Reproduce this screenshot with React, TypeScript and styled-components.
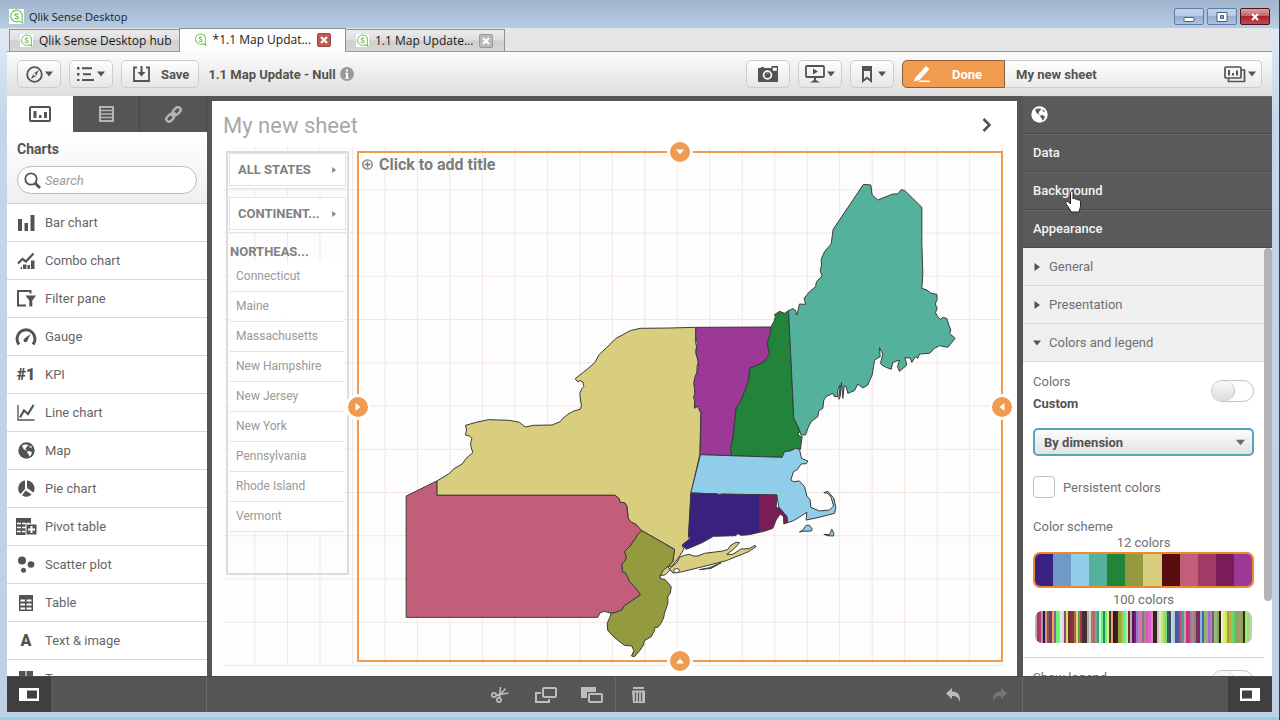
import React from 'react';
import styled, { createGlobalStyle, css } from 'styled-components';

const ink = '#545352';
const orange = '#ef9c50';
const ui = `Roboto, "Liberation Sans", sans-serif`;
const chrome = `"Open Sans", "Noto Sans", sans-serif`;

const GlobalStyle = createGlobalStyle`
  * { box-sizing: border-box; }
  body { margin: 0; font-family: ${ui}; font-size: 13px; color: ${ink}; }
  button, input, select { font: inherit; color: inherit; }
  button { border: 0; padding: 0; background: none; cursor: pointer; }
  ul { list-style: none; margin: 0; padding: 0; }
  h1, h2, h3, p { margin: 0; font-size: inherit; font-weight: inherit; }
  svg { display: block; flex: none; }
`;

/* ---------- window ---------- */

const Window = styled.div`
  display: flex;
  flex-direction: column;
  height: 100vh;
  padding: 0 7px 8px;
  overflow: hidden;
  border-right: 1px solid #0d4a52;
  background:
    linear-gradient(#8fd3ea, #8fd3ea) bottom / 100% 3px no-repeat,
    linear-gradient(#a1b5cc, #b7cce4 28px, #dfeaf6 29px, #c4d6ea 120px, #bfcfe4);
`;

const TitleBar = styled.header`
  display: flex;
  align-items: center;
  flex: none;
  height: 28px;
  padding: 5px 2px 0;
  gap: 5px;
  font-family: ${chrome};
  font-size: 11px;
  color: #1a1a1a;
`;

const WindowTitle = styled.h1`
  flex: 1;
`;

const WindowButtons = styled.div`
  display: flex;
  gap: 3px;
`;

const WindowButton = styled.button<{ $close?: boolean }>`
  display: grid;
  place-items: center;
  width: 30px;
  height: 17px;
  border: 1px solid ${p => (p.$close ? '#4a1420' : '#5f7da6')};
  border-radius: 2px;
  background: ${p =>
    p.$close
      ? 'linear-gradient(#dba3a6, #c4636a 45%, #a8242c 50%, #c04a50)'
      : 'linear-gradient(#c3d5ec, #b4c9e4 45%, #95afd0 50%, #acc3df)'};
`;

const TabStrip = styled.nav`
  display: flex;
  align-items: flex-end;
  flex: none;
  height: 24px;
  padding-left: 2px;
  background: #e6e6e6;
  border-bottom: 1px solid #9a9a9a;
  font-family: ${chrome};
  font-size: 12px;
  color: #1a1a1a;
`;

const Tab = styled.div<{ $active?: boolean }>`
  display: flex;
  align-items: center;
  height: 22px;
  padding: 0 7px 0 10px;
  border: 1px solid #8f8f8f;
  border-bottom: 0;
  margin-right: -1px;
  gap: 6px;
  background: linear-gradient(#ececec, #dedede 48%, #cfcfcf 52%, #d6d6d6);
  ${p => p.$active && css`
    position: relative;
    height: 24px;
    padding: 0 10px 2px 14px;
    margin-bottom: -1px;
    background: #fdfdfd;
  `}
`;

const TabLabel = styled.button`
  display: flex;
  align-items: center;
  gap: 6px;
`;

const TabClose = styled.button<{ $hot?: boolean }>`
  display: grid;
  place-items: center;
  width: 14px;
  height: 14px;
  margin-right: 4px;
  border: 1px solid ${p => (p.$hot ? '#9c4a42' : '#9a9a9a')};
  border-radius: 2px;
  background: ${p => (p.$hot ? '#c0594f' : '#b9b9b9')};
`;

/* ---------- toolbar ---------- */

const Toolbar = styled.div`
  display: flex;
  align-items: center;
  flex: none;
  height: 44px;
  padding: 0 10px;
  gap: 8px;
  background: linear-gradient(#fcfcfc, #dedede);
  font-weight: 700;
`;

const ToolButton = styled.button`
  display: flex;
  align-items: center;
  justify-content: center;
  height: 28px;
  min-width: 44px;
  padding: 0 6px;
  gap: 2px;
  border: 1px solid #cdcdcd;
  border-radius: 5px;
  background: linear-gradient(#fdfdfd, #e6e6e6);
  font-weight: 700;
`;

const SaveButton = styled(ToolButton)`
  padding: 0 9px 0 10px;
  gap: 10px;
`;

const AppName = styled.div`
  display: flex;
  align-items: center;
  flex: 1;
  gap: 4px;
  padding-left: 1px;
`;

const SheetSwitch = styled.div`
  display: flex;
  width: 360px;
  height: 28px;
`;

const DoneButton = styled.button`
  display: flex;
  align-items: center;
  width: 103px;
  padding-left: 10px;
  gap: 19px;
  border: 1px solid #8a6238;
  border-radius: 5px 0 0 5px;
  background: #f09b4d;
  color: #fff;
  font-weight: 700;
`;

const SheetPicker = styled.button`
  display: flex;
  align-items: center;
  justify-content: space-between;
  flex: 1;
  padding: 0 5px 0 11px;
  border: 1px solid #cdcdcd;
  border-left: 0;
  border-radius: 0 5px 5px 0;
  background: linear-gradient(#fdfdfd, #ebebeb);
  font-weight: 700;
`;

const IconRow = styled.span`
  display: flex;
  align-items: center;
  gap: 2px;
`;

/* ---------- body ---------- */

const Body = styled.main`
  display: grid;
  grid-template-columns: 200px minmax(0, 1fr) 249px;
  grid-template-rows: minmax(0, 1fr);
  flex: 1;
  min-height: 0;
`;

const AssetPanel = styled.aside`
  display: flex;
  flex-direction: column;
  min-height: 0;
  overflow: hidden;
  background: #fff;
`;

const AssetTabs = styled.div`
  display: grid;
  grid-template-columns: 66px 1fr 1fr;
  flex: none;
  height: 36px;
  background: #555;
`;

const AssetTab = styled.button<{ $active?: boolean }>`
  display: grid;
  place-items: center;
  color: ${p => (p.$active ? ink : '#b5b5b5')};
  background: ${p => (p.$active ? '#fff' : '#555')};
  border-right: 1px solid ${p => (p.$active ? '#fff' : '#474747')};
`;

const AssetHead = styled.div`
  flex: none;
  height: 72px;
  padding: 9px 10px 0;
  border-bottom: 1px solid #cfd4d6;
  background: linear-gradient(#fff, #efefef);
`;

const AssetTitle = styled.h2`
  font-size: 14px;
  line-height: 16px;
  font-weight: 700;
`;

const SearchField = styled.label`
  display: flex;
  align-items: center;
  height: 28px;
  margin-top: 9px;
  padding: 0 6px;
  gap: 4px;
  border: 1px solid #bdbdbd;
  border-radius: 14px;
  background: #fff;
`;

const SearchInput = styled.input`
  flex: 1;
  min-width: 0;
  padding: 0;
  border: 0;
  outline: 0;
  background: none;
  font-style: italic;
  &::placeholder { color: #9b9b9b; }
`;

const AssetItem = styled.li`
  display: flex;
  align-items: center;
  height: 38px;
  padding-left: 8px;
  gap: 8px;
  border-bottom: 1px solid #d3dadd;
  color: #666;
`;

const AssetIcon = styled.span`
  display: grid;
  place-items: center;
  width: 22px;
  height: 22px;
  font-size: 16px;
  font-weight: 900;
  color: ${ink};
`;

const Stage = styled.section`
  display: flex;
  min-width: 0;
  padding: 5px 6px 0 5px;
  background: #555;
`;

const Sheet = styled.div`
  display: flex;
  flex-direction: column;
  flex: 1;
  min-width: 0;
  padding: 0 14px 10px 11px;
  background: #fff;
`;

const SheetHead = styled.div`
  display: flex;
  align-items: center;
  justify-content: space-between;
  flex: none;
  height: 46px;
  padding: 2px 10px 0 0;
`;

const SheetTitle = styled.h2`
  font-size: 22px;
  font-weight: 400;
  color: #a8a8a8;
`;

const Canvas = styled.div`
  display: grid;
  grid-template-columns: 123px minmax(0, 1fr);
  grid-template-rows: minmax(0, 1fr);
  gap: 8px;
  flex: 1;
  min-height: 0;
  padding: 4px 0 4px 3px;
  background-color: #fefdfd;
  background-image:
    linear-gradient(to left, #f3e6df 1px, transparent 1px),
    linear-gradient(to top, #f3e6df 1px, transparent 1px);
  background-size: calc(100% / 24) 100%, 100% calc(100% / 12);
`;

const FilterPane = styled.div`
  height: 83%;
  padding: 0 1px;
  border: 2px solid #dcdcdc;
  overflow: hidden;
  font-size: 12px;
  color: #999;
`;

const FilterButton = styled.button`
  display: flex;
  align-items: center;
  justify-content: space-between;
  width: 100%;
  height: 36px;
  margin-bottom: 8px;
  padding: 0 8px;
  border: 1px solid #e4e4e4;
  border-bottom: 4px double #e4e4e4;
  background: #fffffff0;
  font-weight: 700;
  font-size: 13px;
  color: #808080;
`;

const ListTitle = styled.h3`
  padding-left: 1px;
  line-height: 21px;
  font-weight: 700;
  font-size: 13px;
  color: #808080;
`;

const StateList = styled.ul`
  padding: 0 2px 0 1px;
`;

const StateItem = styled.li`
  height: 30px;
  padding-left: 6px;
  line-height: 29px;
  border-bottom: 1px solid #e4e4e4;
  background: #fffffff0;
`;

const ChartFrame = styled.div`
  position: relative;
  display: flex;
  flex-direction: column;
  min-width: 0;
  min-height: 0;
  border: 2px solid ${orange};
`;

const ChartTitle = styled.div`
  display: flex;
  align-items: center;
  flex: none;
  height: 26px;
  padding: 0 0 4px 3px;
  gap: 6px;
  font-size: 16px;
  font-weight: 700;
  color: #7c7c7c;
`;

const MapArea = styled.svg`
  flex: 1;
  width: 100%;
  min-height: 0;
`;

const edges = {
  top: css`top: -14px; left: calc(50% - 13px);`,
  bottom: css`bottom: -14px; left: calc(50% - 13px); transform: rotate(180deg);`,
  left: css`left: -14px; top: calc(50% - 13px); transform: rotate(-90deg);`,
  right: css`right: -14px; top: calc(50% - 13px); transform: rotate(90deg);`,
};

const Handle = styled.button<{ $edge: keyof typeof edges }>`
  position: absolute;
  width: 26px;
  height: 26px;
  display: grid;
  place-items: center;
  border: 3px solid #fff;
  border-radius: 50%;
  background: ${orange};
  ${p => edges[p.$edge]}
`;

/* ---------- properties ---------- */

const Properties = styled.aside`
  display: flex;
  flex-direction: column;
  min-height: 0;
  overflow: hidden;
  background: #fff;
`;

const PropHeader = styled.button`
  position: relative;
  display: flex;
  align-items: center;
  flex: none;
  height: 38px;
  padding-left: 10px;
  background: #5a5a5a;
  border-bottom: 1px solid #4a4a4a;
  box-shadow: inset 0 1px #686868;
  color: #f4f4f4;
  font-weight: 500;
`;

const PropIcon = styled(PropHeader)`
  padding-left: 8px;
`;

const Pointer = styled.svg`
  position: absolute;
  left: 42px;
  top: 18px;
  z-index: 1;
`;

const PropScroll = styled.div`
  flex: 1;
  min-height: 0;
  display: grid;
  grid-template-columns: minmax(0, 1fr) 8px;
  overflow: hidden;
`;

const ScrollThumb = styled.div`
  height: 353px;
  border-radius: 4px;
  background: #b3b3b3;
`;

const Section = styled.button`
  display: flex;
  align-items: center;
  width: 100%;
  height: 38px;
  padding-left: 10px;
  gap: 8px;
  border-bottom: 1px solid #d9d9d9;
  background: #efefef;
  color: #707070;
`;

const SectionBody = styled.div`
  padding: 9px 10px 0;
  color: #707070;
`;

const Switch = styled.input`
  appearance: none;
  width: 43px;
  height: 22px;
  margin: 0;
  border: 1px solid #c4c4c4;
  border-radius: 11px;
  background: #fdfdfd;
  &::before {
    content: '';
    display: block;
    width: 22px;
    height: 20px;
    border-right: 1px solid #c4c4c4;
    border-radius: 11px;
    background: linear-gradient(#fafafa, #dcdcdc);
  }
`;

const ColorsRow = styled.label`
  display: flex;
  align-items: flex-start;
  justify-content: space-between;
  height: 43px;
  line-height: 22px;
  ${Switch} { margin-top: 9px; }
`;

const Strong = styled.strong`
  display: block;
  color: ${ink};
`;

const SelectBox = styled.div`
  display: grid;
  grid-template-columns: 1fr;
  align-items: center;
  margin-top: 14px;
  > * { grid-area: 1 / 1; }
  > svg { justify-self: end; margin-right: 9px; pointer-events: none; }
`;

const Select = styled.select`
  appearance: none;
  width: 100%;
  height: 28px;
  padding: 0 9px;
  border: 2px solid #55a5bd;
  border-radius: 5px;
  background: linear-gradient(#fcfcfc, #e2e2e2);
  color: ${ink};
  font-weight: 700;
`;

const CheckRow = styled.label`
  display: flex;
  align-items: center;
  height: 22px;
  margin-top: 20px;
  gap: 8px;
`;

const Check = styled.input`
  appearance: none;
  width: 22px;
  height: 22px;
  margin: 0;
  border: 1px solid #c0c0c0;
  border-radius: 4px;
  background: #fff;
`;

const FieldLabel = styled.p`
  margin-top: 20px;
  line-height: 17px;
`;

const Scheme = styled.button`
  display: block;
  width: 100%;
  line-height: 16px;
  margin-bottom: 4px;
`;

const Swatches = styled.span<{ $selected?: boolean }>`
  display: flex;
  height: ${p => (p.$selected ? 36 : 32)}px;
  margin: ${p => (p.$selected ? '1px 0 0' : '3px 2px 0')};
  border: ${p => (p.$selected ? '2px solid #ee8a2e' : '0')};
  border-radius: 7px;
  overflow: hidden;
`;

const Swatch = styled.span<{ $c: string }>`
  flex: 1;
  background: ${p => p.$c};
`;

const LegendRow = styled.label`
  display: flex;
  align-items: flex-start;
  justify-content: space-between;
  margin: 14px -10px 0;
  padding: 12px 10px 0;
  border-top: 1px solid #d4d4d4;
`;

/* ---------- footer ---------- */

const Footer = styled.footer`
  display: grid;
  grid-template-columns: 200px minmax(0, 1fr) 250px;
  flex: none;
  height: 36px;
  background: #565656;
  border-top: 1px solid #4a4a4a;
`;

const FooterGroup = styled.div<{ $end?: boolean }>`
  display: flex;
  justify-content: ${p => (p.$end ? 'flex-end' : 'flex-start')};
  border-${p => (p.$end ? 'left' : 'right')}: 1px solid #6a6a6a;
`;

const PanelToggle = styled.button`
  display: grid;
  place-items: center;
  width: 44px;
  background: #3f3f3f;
`;

const EditTools = styled.div`
  display: flex;
  align-items: center;
  padding-left: 270px;
`;

const EditButton = styled.button<{ $dim?: boolean; $divided?: boolean }>`
  display: grid;
  place-items: center;
  width: 46px;
  height: 100%;
  color: ${p => (p.$dim ? '#757575' : '#bdbdbd')};
  ${p => p.$divided && css`border-left: 1px solid #666;`}
`;

const Spacer = styled.span`
  flex: 1;
`;

/* ---------- icons ---------- */

const Caret = ({ dir = 'down', size = 8, color = ink }: { dir?: 'down' | 'right'; size?: number; color?: string }) => (
  <svg width={size} height={size} viewBox="0 0 8 8" fill={color}>
    <path d={dir === 'down' ? 'M0 1.5h8L4 6.5z' : 'M1.5 0v8L7 4z'} />
  </svg>
);

const Logo = ({ size = 13 }: { size?: number }) => (
  <svg width={size} height={size} viewBox="0 0 14 14" fill="none" stroke="#74c153">
    <rect width="14" height="14" fill="#fff" stroke="none" />
    <path d="M12 9A5.500 5.500 0 1 0 9.500 11.500L12.800 13L12 9" strokeWidth="1.100" />
    <path d="M8.700 5C8 4.200 5.600 4.300 5.600 5.500S8.700 6.700 8.700 8.100 6 9.400 5.300 8.500" strokeWidth="1.200" />
  </svg>
);

const Cross = ({ size = 8 }: { size?: number }) => (
  <svg width={size} height={size} viewBox="0 0 8 8" stroke="#fff" strokeWidth="2">
    <path d="M1 1l6 6M7 1L1 7" />
  </svg>
);

const Globe = ({ size = 17, land = '#fff', sea = ink }: { size?: number; land?: string; sea?: string }) => (
  <svg width={size} height={size} viewBox="0 0 17 17">
    <circle cx="8.500" cy="8.500" r="8.200" fill={sea} />
    <path d="M4 3.500C5.500 2.500 7 2.300 9 2.500l1.500 1-1.500 1L8 6l-.8 1L9 8.300 8 8.500 5.500 7zM9.500 9l2.500.3 2 1.200-1 2.500-1.800 1.800-.5-2.600L9.300 11zM11.500 3.500l2.500 1.500-.8 1-1.700-1z" fill={land} />
  </svg>
);

const ChartBoard = () => (
  <svg width="22" height="16" viewBox="0 0 22 16" fill="currentColor">
    <rect x="1" y="1" width="20" height="14" rx="1" fill="none" stroke="currentColor" strokeWidth="2" />
    <path d="M4.500 5h3v7h-3zM10 9h2.500v3H10zM15 6h3v6h-3z" />
  </svg>
);

const assets: [string, React.ReactNode][] = [
  ['Bar chart', <svg width="18" height="16" viewBox="0 0 18 16" fill={ink}><path d="M1 4h4v12H1zM7.500 8h3.500v8H7.500zM13.500 0h4v16h-4z" /></svg>],
  ['Combo chart', <svg width="18" height="16" viewBox="0 0 18 16"><path d="M1 10.500L5.500 6l3.500 2.500L16.500 0.500" fill="none" stroke={ink} strokeWidth="2.200" /><path d="M3 16l2-3v3zM6 11.500h3.500V16H6zM10.500 12H13v4h-2.500zM14 7.500h3.500V16H14z" fill={ink} /></svg>],
  ['Filter pane', <svg width="20" height="17" viewBox="0 0 20 17"><path d="M14.500 3.500V1H2v14.500h8" fill="none" stroke={ink} strokeWidth="2" /><path d="M9.500 5.500H20l-3.700 5v6h-3v-6z" fill={ink} /></svg>],
  ['Gauge', <svg width="22" height="18" viewBox="0 0 22 18"><path d="M4 16.500A9 9 0 1 1 18 16.500" fill="none" stroke={ink} strokeWidth="3" /><path d="M15.500 6l-3 6.500a2 2 0 1 1-3-2z" fill={ink} /></svg>],
  ['KPI', '#1'],
  ['Line chart', <svg width="18" height="17" viewBox="0 0 18 17" fill="none" stroke={ink}><path d="M1 1v15h16.500" strokeWidth="1.300" /><path d="M3 13.500l4-7 4 3.500 5.500-9" strokeWidth="2.200" /></svg>],
  ['Map', <Globe />],
  ['Pie chart', <svg width="17" height="17" viewBox="0 0 17 17" fill={ink}><path d="M7 .5A8 8 0 0 0 2.500 14L7 9zM9 .5A8 8 0 0 1 15.500 12.500L9 8zM7.700 10.500l6 4A8 8 0 0 1 4 15.200z" /></svg>],
  ['Pivot table', <svg width="22" height="17" viewBox="0 0 22 17"><path d="M1 0h15v17H1z" fill={ink} /><path d="M2 5.500h4M7 5.500h4M12 5.500h3M2 9.500h4M7 9.500h4M2 13.500h4M7 13.500h3" stroke="#fff" strokeWidth="1.500" /><path d="M11 6h11v11H11z" fill={ink} stroke="#fff" /><path d="M16.500 8v7M13 11.500h7" stroke="#fff" strokeWidth="2" /></svg>],
  ['Scatter plot', <svg width="18" height="17" viewBox="0 0 18 17" fill={ink}><circle cx="5" cy="4.500" r="4" /><circle cx="14" cy="8.500" r="3.300" /><circle cx="6.500" cy="14.300" r="2.500" /></svg>],
  ['Table', <svg width="14" height="16" viewBox="0 0 14 16"><path d="M0 0h14v16H0z" fill={ink} /><path d="M1.500 5.500H6M7.500 5.500h5M1.500 9.500H6M7.500 9.500h5M1.500 13.500H6M7.500 13.500h5" stroke="#fff" strokeWidth="2" /></svg>],
  ['Text & image', 'A'],
  ['Treemap', <svg width="16" height="16" viewBox="0 0 16 16" fill={ink}><path d="M1 0h6.500v16H1zM8.500 0H15v7H8.500zM8.500 8H15v8H8.500z" /></svg>],
];

/* ---------- map data ---------- */

// Shared boundary runs, so neighbouring states meet without slivers.
const delaware = '677,556 688,565 692,577 705,578 712,588 714,605 716,625 725,637 738,642 750,655 757,662';
const paNj = '757,662 745,673 738,685 722,708 705,725 711,742 705,755 697,762 699,785 706,787 714,800 720,815 732,827 745,842 753,855 733,868 705,887 697,900 680,907 665,910';
const njPa = paNj.split(' ').reverse().join(' ');

const shapes: { origin: [number, number]; fill: string; points: string }[] = [
  { origin: [96, 474], fill: '#d9cd7e', points: `142,513 180,490 192,477 218,462 230,445 250,428 245,412 243,400 247,385 240,378 228,375 231,360 228,346 260,337 297,329 360,331 390,337 407,351 432,346 488,345 512,335 520,325 535,313 553,303 572,298 576,288 573,270 571,250 577,236 583,230 580,216 572,212 564,215 557,206 590,180 616,158 628,135 650,114 680,85 722,62 752,55 840,54 918,52 920,70 917,90 921,110 919,130 927,155 922,172 923,190 914,215 916,250 920,262 914,290 920,293 925,288 934,310 931,433 905,548 897,683 903,685 878,705 883,718 866,745 848,768 835,770 850,755 855,718 757,662 ${delaware.split(' ').reverse().join(' ')} 142,556` },
  { origin: [96, 474], fill: '#c25d7a', points: `142,513 142,556 ${delaware} ${paNj} 645,904 632,908 625,922 50,922 50,558` },
  { origin: [96, 474], fill: '#949b3e', points: `757,662 855,718 850,755 835,770 812,797 812,806 826,808 845,830 843,848 835,860 835,880 825,910 822,925 813,942 805,952 796,952 795,962 785,980 765,992 762,1005 752,1020 735,1040 726,1038 733,1022 727,1008 705,1006 680,987 655,962 653,940 662,920 ${njPa}` },
  { origin: [936, 54], fill: '#9c3895', points: '80,472 304,471 303,490 293,520 300,550 285,575 260,587 240,595 238,630 225,665 215,690 200,715 195,760 190,810 183,835 186,857 92,854 95,730 85,708 75,715 77,700 72,680 77,670 73,640 76,622 85,600 86,575 79,545 83,520 78,495' },
  { origin: [936, 54], fill: '#22833a', points: '304,471 313,455 318,440 315,434 330,424 345,430 357,422 373,740 388,765 390,785 385,795 398,800 395,820 393,838 378,835 365,842 350,845 338,862 186,857 183,835 190,810 195,760 200,715 215,690 225,665 238,630 240,595 260,587 285,575 300,550 293,520 303,490' },
  { origin: [936, 54], fill: '#54b19c', points: '357,422 370,416 377,420 382,435 390,402 408,403 404,385 420,365 438,350 441,335 458,318 452,302 456,285 455,268 465,245 485,222 491,178 582,43 604,45 608,75 625,90 670,72 685,72 695,59 706,62 757,112 757,220 760,310 757,355 772,360 785,370 802,373 803,388 797,402 803,415 798,428 803,438 812,448 822,442 832,446 838,465 844,480 840,490 857,505 835,532 810,527 795,535 780,550 750,552 745,565 738,560 727,577 722,564 706,563 712,585 690,604 684,590 690,570 670,577 665,598 650,592 637,585 633,580 640,552 636,545 630,533 632,560 615,570 612,590 608,615 600,632 595,645 580,654 565,642 555,662 535,670 530,650 524,648 520,685 516,636 512,680 508,688 512,645 505,660 505,680 495,680 490,670 470,680 463,690 460,715 448,722 445,740 425,755 415,775 408,795 395,795 388,775 373,745' },
  { origin: [696, 804], fill: '#8fcde8', points: '333,104 420,107 578,112 585,95 605,92 618,85 630,88 636,115 655,123 650,131 635,132 622,150 612,155 604,180 612,185 630,183 645,200 652,228 662,240 664,262 690,273 720,270 732,258 725,232 715,220 703,218 715,214 733,235 739,262 735,280 680,294 650,300 652,276 640,285 612,302 594,308 592,290 580,275 568,262 562,225 390,223 304,218' },
  { origin: [696, 804], fill: '#39217f', points: '304,220 382,221 390,225 397,222 510,224 510,337 480,344 455,346 445,341 438,347 372,349 340,367 315,378 290,388 278,375 303,355 297,345' },
  { origin: [696, 804], fill: '#7a1c58', points: '510,224 562,225 560,262 568,265 572,282 560,300 550,325 530,332 510,337' },
  { origin: [696, 804], fill: '#7a1c58', points: '568,262 580,275 592,290 594,308 583,312 582,290 570,280' },
  { origin: [696, 804], fill: '#d9cd7e', points: '240,446 262,428 270,412 285,406 300,403 312,408 325,408 345,400 400,393 415,388 425,375 440,367 450,368 435,385 412,403 430,403 455,387 478,386 497,376 499,381 475,396 410,422 340,440 270,457 250,459' },
  { origin: [696, 804], fill: '#d9cd7e', points: '212,467 222,450 235,440 242,450 228,464' },
  { origin: [696, 804], fill: '#6b6b50', points: '330,449 360,443 395,428 365,445' },
  { origin: [696, 804], fill: '#8fcde8', points: '630,336 640,330 650,316 660,316 668,326 666,333 640,334' },
  { origin: [696, 804], fill: '#8fcde8', points: '703,343 720,344 727,328 733,340 732,348 715,347' },
];

const StateMap = () => (
  <MapArea viewBox="6 81 1923 1443" role="img" aria-label="Map of the northeastern states">
    {shapes.map((s, i) => (
      <polygon
        key={i}
        points={s.points}
        transform={`translate(${s.origin[0]} ${s.origin[1]})`}
        fill={s.fill}
        stroke="#3b3a3c"
        strokeWidth="3"
        strokeLinejoin="round"
      />
    ))}
    <ellipse cx="957" cy="1256" rx="9" ry="6" fill="#fff" stroke="#3b3a3c" strokeWidth="3" />
  </MapArea>
);

const states = ['Connecticut', 'Maine', 'Massachusetts', 'New Hampshire', 'New Jersey', 'New York', 'Pennsylvania', 'Rhode Island', 'Vermont'];

const twelve = ['#39217f', '#7099c8', '#8fcde8', '#54b19c', '#22833a', '#949b3e', '#d9cd7e', '#5a0d0d', '#c25d7a', '#a03b66', '#7a1c58', '#9c3895'];

const hundred = (
  'b8b0a8 b03070 c83078 a0a0a0 201848 e09080 70604c 902878 e0b040 9060a0 60f870 70f870 d8f0d8 e0d0f0 8a4a6a d8e060 5a3a2a 902a3a 8a3040 a07050 f0d060 50a848 c02850 453030 453030 b0b0a8 ' +
  'd8d0c8 c07068 b06860 60b098 3a9a88 d0f0c8 68f078 209060 70f860 e8f080 404040 e8a090 3a1414 4a1a1a 88a840 98b040 b8c850 60f890 b0f0b0 802838 c0b0a0 501858 801880 9878c8 b080d0 d878a8 ' +
  'a06880 88a070 d858c8 e060d0 d090b0 3a2020 3a2020 d0c0c0 c8f0c0 c8e888 b0d850 70e088 386060 385050 c8d8e8 b0c8d8 3860a0 6050a8 c04860 5098a0 b0b0a8 d82888 d83080 8888a0 b08878 987890 ' +
  '703058 802858 88b8d8 5060b8 90b850 a0a890 a868d0 b878d0 686860 98b880 80a858 301c10 f0f0d8 e0f060 d8e850 90a840 c8a850 68d868 68d060 80a870 a09868 a0a060 88a058 402818 90f070 a8d880 b8d8a8'
).split(' ').map(c => `#${c}`);

export default function App() {
  return (
    <Window>
      <GlobalStyle />
      <TitleBar>
        <Logo size={15} />
        <WindowTitle>Qlik Sense Desktop</WindowTitle>
        <WindowButtons>
          <WindowButton aria-label="Minimize">
            <svg width="12" height="10" viewBox="0 0 12 10"><rect x="1" y="5.500" width="10" height="4" rx="1" fill="#fff" stroke="#4d5d75" /></svg>
          </WindowButton>
          <WindowButton aria-label="Maximize">
            <svg width="12" height="10" viewBox="0 0 12 10"><path d="M1 .5h10v9H1zM4.500 3.500h3v3h-3z" fill="#fff" fillRule="evenodd" stroke="#4d5d75" /></svg>
          </WindowButton>
          <WindowButton $close aria-label="Close"><Cross /></WindowButton>
        </WindowButtons>
      </TitleBar>

      <TabStrip>
        <Tab><TabLabel><Logo />Qlik Sense Desktop hub</TabLabel></Tab>
        <Tab $active>
          <TabLabel><Logo />*1.1 Map Updat...</TabLabel>
          <TabClose $hot aria-label="Close tab"><Cross /></TabClose>
        </Tab>
        <Tab>
          <TabLabel><Logo />1.1 Map Update...</TabLabel>
          <TabClose aria-label="Close tab"><Cross /></TabClose>
        </Tab>
      </TabStrip>

      <Toolbar>
        <ToolButton aria-label="Navigation">
          <svg width="17" height="17" viewBox="0 0 17 17"><circle cx="8.500" cy="8.500" r="7.300" fill="none" stroke={ink} strokeWidth="1.800" /><path d="M13 4L10 10l-5 3 2.500-5.500z" fill={ink} /><circle cx="8.500" cy="8.500" r="1.200" fill="#fff" /></svg>
          <Caret />
        </ToolButton>
        <ToolButton aria-label="Menu">
          <svg width="18" height="14" viewBox="0 0 18 14" fill={ink}><path d="M0 0h2.500v2.500H0zM0 6h2.500v2.500H0zM0 12h2.500v2H0zM5 .3h10v2H5zM6 6.200h8v2H6zM5 12h12v2H5z" /></svg>
          <Caret />
        </ToolButton>
        <SaveButton>
          <svg width="19" height="16" viewBox="0 0 19 16"><path d="M5 1.500H2V15h15V1.500h-3" fill="none" stroke={ink} strokeWidth="1.800" /><path d="M8.500 0h2v6h3l-4 4.500L5.500 6h3z" fill={ink} /></svg>
          Save
        </SaveButton>
        <AppName>
          1.1 Map Update - Null
          <svg width="14" height="14" viewBox="0 0 14 14"><circle cx="7" cy="7" r="7" fill="#9a9a9a" /><path d="M6 2.500h2v2H6zM5.200 5.700H8v5h1v1H5.200v-1H6V6.700h-.8z" fill="#fff" /></svg>
        </AppName>
        <ToolButton aria-label="Snapshot">
          <svg width="20" height="16" viewBox="0 0 20 16"><path d="M0 2h3V1h3v1h7.500V0H20v16H0z" fill={ink} /><circle cx="9.500" cy="9" r="3.900" fill={ink} stroke="#fff" strokeWidth="1.700" /><path d="M8.500 7.500a2 2 0 0 1 2-.5M15 2h3.500v2.500H15z" fill="#fff" stroke="#fff" strokeWidth=".5" /></svg>
        </ToolButton>
        <ToolButton aria-label="Stories">
          <svg width="20" height="18" viewBox="0 0 20 18"><rect x="1" y="1" width="18" height="11" rx="1" fill="none" stroke={ink} strokeWidth="1.800" /><path d="M8 3.500v6l5-3zM9 12h2v3l4 2.500H5L9 15z" fill={ink} /></svg>
          <Caret />
        </ToolButton>
        <ToolButton aria-label="Bookmarks">
          <svg width="18" height="17" viewBox="0 0 18 17"><path d="M4 0h10v17l-5-4-5 4z" fill={ink} /><path d="M6 5h6v8l-3-2.500L6 13z" fill="#eee" /></svg>
          <Caret />
        </ToolButton>
        <SheetSwitch>
          <DoneButton>
            <svg width="20" height="16" viewBox="0 0 20 16" fill="#fff"><path d="M2 12L13 0l3.500 3L6.500 14 1 15.500zM7 14.500h10V16H5z" /></svg>
            Done
          </DoneButton>
          <SheetPicker>
            My new sheet
            <IconRow>
              <svg width="22" height="17" viewBox="0 0 22 17"><path d="M17.500 4h3v11.500h-16v-3" fill="none" stroke={ink} strokeWidth="1.700" /><rect x="1" y="1" width="16" height="11" rx="1" fill="none" stroke={ink} strokeWidth="1.700" /><path d="M4 4h2v5.500H4zM8 7h2v2.500H8zM12 4.500h2v5h-2z" fill={ink} /></svg>
              <Caret />
            </IconRow>
          </SheetPicker>
        </SheetSwitch>
      </Toolbar>

      <Body>
        <AssetPanel>
          <AssetTabs>
            <AssetTab $active aria-label="Charts"><ChartBoard /></AssetTab>
            <AssetTab aria-label="Fields">
              <svg width="15" height="16" viewBox="0 0 15 16" fill="none" stroke="currentColor"><rect x="1" y="1" width="13" height="14" strokeWidth="2" /><path d="M2 4.500h11M2 8h11M2 11.500h11" strokeWidth="1.500" /></svg>
            </AssetTab>
            <AssetTab aria-label="Master items">
              <svg width="17" height="17" viewBox="0 0 17 17" fill="none" stroke="currentColor" strokeWidth="2.400"><rect x="-4.300" y="-2.700" width="8.600" height="5.400" rx="2.700" transform="translate(11.800 5) rotate(-45)" /><rect x="-4.300" y="-2.700" width="8.600" height="5.400" rx="2.700" transform="translate(5.200 11.800) rotate(-45)" /><path d="M6.500 10.500l4-4" /></svg>
            </AssetTab>
          </AssetTabs>
          <AssetHead>
            <AssetTitle>Charts</AssetTitle>
            <SearchField>
              <svg width="17" height="17" viewBox="0 0 17 17" fill="none" stroke={ink}><circle cx="7" cy="7" r="5.700" strokeWidth="1.800" /><path d="M11 11l5 5" strokeWidth="2.800" /></svg>
              <SearchInput aria-label="Search" placeholder="Search" />
            </SearchField>
          </AssetHead>
          <ul>
            {assets.map(([name, icon]) => (
              <AssetItem key={name}><AssetIcon>{icon}</AssetIcon>{name}</AssetItem>
            ))}
          </ul>
        </AssetPanel>

        <Stage>
          <Sheet>
            <SheetHead>
              <SheetTitle>My new sheet</SheetTitle>
              <button aria-label="Next sheet">
                <svg width="12" height="14" viewBox="0 0 12 14" fill="none" stroke={ink} strokeWidth="2.600"><path d="M2.500 1l6 6-6 6" /></svg>
              </button>
            </SheetHead>
            <Canvas>
              <FilterPane>
                <FilterButton>ALL STATES<Caret dir="right" size={6} color="#8a8a8a" /></FilterButton>
                <FilterButton>CONTINENT...<Caret dir="right" size={6} color="#8a8a8a" /></FilterButton>
                <ListTitle>NORTHEAS...</ListTitle>
                <StateList>
                  {states.map(s => <StateItem key={s}>{s}</StateItem>)}
                </StateList>
              </FilterPane>
              <ChartFrame>
                <ChartTitle>
                  <svg width="11" height="11" viewBox="0 0 11 11" fill="none" stroke="#7c7c7c"><circle cx="5.500" cy="5.500" r="4.700" strokeWidth="1.300" /><path d="M5.500 2.500v6M2.500 5.500h6" strokeWidth="1.500" /></svg>
                  Click to add title
                </ChartTitle>
                <StateMap />
                {(['top', 'right', 'bottom', 'left'] as const).map(edge => (
                  <Handle key={edge} $edge={edge} aria-label={`Resize ${edge}`}><Caret color="#fff" /></Handle>
                ))}
              </ChartFrame>
            </Canvas>
          </Sheet>
        </Stage>

        <Properties>
          <PropIcon as="div"><Globe land="#5a5a5a" sea="#fff" /></PropIcon>
          <PropHeader>Data</PropHeader>
          <PropHeader>
            Background
            <Pointer width="17" height="23" viewBox="0 0 17 23" fill="#fff" stroke="#222">
              <path d="M5.500 2.500C5.500.5 8 .5 8 2.500V9c.5-1.500 2.500-1 2.500.5.500-1 2.500-.7 2.500.8.500-.8 2.500-.5 2.500 1.200v5L14 22H6.500L1.500 14.500C0 12 1.500 10.500 3.500 12l2 2z" />
            </Pointer>
          </PropHeader>
          <PropHeader>Appearance</PropHeader>
          <PropScroll>
            <div>
              <Section><Caret dir="right" />General</Section>
              <Section><Caret dir="right" />Presentation</Section>
              <Section><Caret />Colors and legend</Section>
              <SectionBody>
                <ColorsRow>
                  <span>Colors<Strong>Custom</Strong></span>
                  <Switch type="checkbox" role="switch" />
                </ColorsRow>
                <SelectBox>
                  <Select aria-label="Color mode"><option>By dimension</option></Select>
                  <Caret size={9} color="#6a6a6a" />
                </SelectBox>
                <CheckRow><Check type="checkbox" />Persistent colors</CheckRow>
                <FieldLabel>Color scheme</FieldLabel>
                <Scheme>
                  12 colors
                  <Swatches $selected>{twelve.map((c, i) => <Swatch key={i} $c={c} />)}</Swatches>
                </Scheme>
                <Scheme>
                  100 colors
                  <Swatches>{hundred.map((c, i) => <Swatch key={i} $c={c} />)}</Swatches>
                </Scheme>
                <LegendRow>Show legend<Switch type="checkbox" role="switch" /></LegendRow>
              </SectionBody>
            </div>
            <ScrollThumb />
          </PropScroll>
        </Properties>
      </Body>

      <Footer>
        <FooterGroup>
          <PanelToggle aria-label="Toggle left panel">
            <svg width="20" height="13" viewBox="0 0 20 13"><path d="M0 0h20v13H0z" fill="#fff" /><path d="M8 2.500h10v8H8z" fill="#3f3f3f" /></svg>
          </PanelToggle>
        </FooterGroup>
        <EditTools>
          <EditButton aria-label="Cut">
            <svg width="18" height="16" viewBox="0 0 18 16" fill="none" stroke="currentColor"><circle cx="3" cy="8" r="2.200" strokeWidth="1.700" /><circle cx="8" cy="13" r="2.200" strokeWidth="1.700" /><path d="M5 8.300L17.500 6M8.500 11L9.500 0M5 8.500l4-.5L14.500 1.500M8 11l1-3" strokeWidth="1.600" /></svg>
          </EditButton>
          <EditButton aria-label="Copy">
            <svg width="22" height="16" viewBox="0 0 22 16" fill="none" stroke="currentColor" strokeWidth="2"><rect x="8" y="1" width="13" height="9" rx="1" /><path d="M6 6H1v9h13v-3" /></svg>
          </EditButton>
          <EditButton aria-label="Paste">
            <svg width="22" height="16" viewBox="0 0 22 16"><path d="M0 0h15v5H6v6H0z" fill="currentColor" /><rect x="8" y="7" width="13" height="8" rx="1" fill="none" stroke="currentColor" strokeWidth="2" /></svg>
          </EditButton>
          <EditButton $divided aria-label="Delete">
            <svg width="14" height="16" viewBox="0 0 14 16"><path d="M1 0h11v2H1zM0 3.500h13V16H1z" fill="currentColor" /><path d="M3.500 5.500v9M6.500 5.500v9M9.500 5.500v9" stroke="#565656" strokeWidth="1.200" /></svg>
          </EditButton>
          <Spacer />
          <EditButton aria-label="Undo">
            <svg width="15" height="14" viewBox="0 0 15 14" fill="currentColor"><path d="M0 5.500L6 0v3.500c6 0 9 4 7.500 10.500C12.500 9.500 10.500 8 6 8v3z" /></svg>
          </EditButton>
          <EditButton $dim aria-label="Redo">
            <svg width="15" height="14" viewBox="0 0 15 14" fill="currentColor"><path d="M15 5.500L9 0v3.500C3 3.500 0 7.500 1.500 14 2.500 9.500 4.500 8 9 8v3z" /></svg>
          </EditButton>
        </EditTools>
        <FooterGroup $end>
          <PanelToggle aria-label="Toggle right panel">
            <svg width="20" height="13" viewBox="0 0 20 13"><path d="M0 0h20v13H0z" fill="#fff" /><path d="M2 2.500h10v8H2z" fill="#3f3f3f" /></svg>
          </PanelToggle>
        </FooterGroup>
      </Footer>
    </Window>
  );
}
